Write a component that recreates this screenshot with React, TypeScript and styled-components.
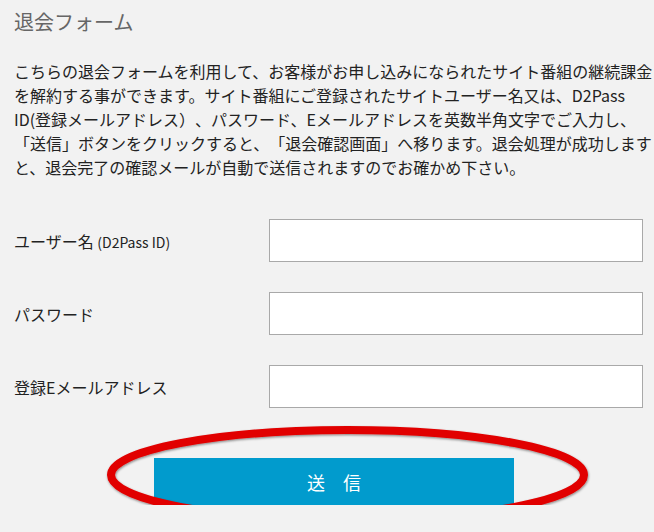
import React from "react";
import styled, { createGlobalStyle } from "styled-components";

const Global = createGlobalStyle`
  html, body { margin: 0; padding: 0; background: #f2f2f2; overflow: hidden; }
  body {
    font-family: "Noto Sans CJK JP", "Noto Sans", sans-serif;
    color: #222;
    text-spacing-trim: space-all;
  }
`;

const Page = styled.div`
  width: 640px;
  padding: 7px 0 0 14px;
  display: flex;
  flex-direction: column;
`;

const Title = styled.h1`
  margin: 0;
  font-size: 20px;
  line-height: 30px;
  font-weight: 400;
  color: #666;
`;

const Intro = styled.p`
  margin: 22px 0 0;
  font-size: 16px;
  line-height: 24px;
  color: #222;
`;

const Form = styled.form`
  margin-top: 40px;
  display: flex;
  flex-direction: column;
  gap: 30px;
`;

const Row = styled.div`
  display: grid;
  grid-template-columns: 255px 374px;
  align-items: center;
`;

const Label = styled.label`
  font-size: 16px;
  color: #222;
`;

const Small = styled.span`
  font-size: 14px;
`;

const Input = styled.input`
  box-sizing: border-box;
  height: 43px;
  width: 374px;
  margin: 0;
  border: 1px solid #a9a9a9;
  background: #fff;
  outline: none;
`;

const ButtonArea = styled.div`
  display: flex;
  justify-content: center;
  margin-top: 20px;
`;

const Submit = styled.button`
  position: relative;
  width: 360px;
  height: 47px;
  border: none;
  margin: 0;
  padding: 0;
  background: #019bcd;
  color: #fff;
  font-family: "Noto Sans CJK JP", sans-serif;
  font-size: 18px;
  box-shadow: 0 2px 0 #bdbdbd;
  cursor: pointer;
`;

const Mark = styled.svg`
  position: absolute;
  left: -52px;
  top: -36px;
  pointer-events: none;
  overflow: visible;
`;

export default function App() {
  return (
    <>
      <Global />
      <Page>
        <Title>退会フォーム</Title>
        <Intro>
          こちらの退会フォームを利用して、お客様がお申し込みになられたサイト番組の継続課金を解約する事ができます。サイト番組にご登録されたサイトユーザー名又は、D2Pass
          ID(登録メールアドレス）、パスワード、Eメールアドレスを英数半角文字でご入力し、「送信」ボタンをクリックすると、「退会確認画面」へ移ります。退会処理が成功しますと、退会完了の確認メールが自動で送信されますのでお確かめ下さい。
        </Intro>
        <Form onSubmit={(e) => e.preventDefault()}>
          <Row>
            <Label>
              ユーザー名 <Small>(D2Pass ID)</Small>
            </Label>
            <Input type="text" />
          </Row>
          <Row>
            <Label>パスワード</Label>
            <Input type="password" />
          </Row>
          <Row>
            <Label>登録Eメールアドレス</Label>
            <Input type="text" />
          </Row>
          <ButtonArea>
            <Submit type="submit">
              送　信
              <Mark width="492" height="108" viewBox="0 0 492 108">
                <defs>
                  <filter id="sh" x="-5%" y="-20%" width="110%" height="140%">
                    <feDropShadow dx="0.6" dy="1.2" stdDeviation="0.8" floodColor="#000" floodOpacity="0.45" />
                  </filter>
                </defs>
                <ellipse
                  cx="245.5"
                  cy="53"
                  rx="236.5"
                  ry="45"
                  fill="none"
                  stroke="#e10000"
                  strokeWidth="8"
                  filter="url(#sh)"
                />
              </Mark>
            </Submit>
          </ButtonArea>
        </Form>
      </Page>
    </>
  );
}
